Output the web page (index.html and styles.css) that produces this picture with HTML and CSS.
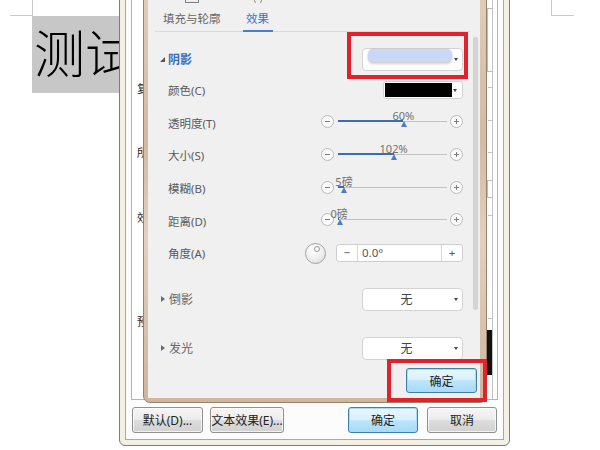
FILE: index.html
```html
<!DOCTYPE html>
<html lang="zh-CN">
<head>
    <meta charset="UTF-8">
    <meta name="viewport" content="width=device-width, initial-scale=1.0">
    <title>设置文本效果格式</title>
    <link rel="stylesheet" href="styles.css">
</head>
<body>
    <div class="desk">
        <!-- word page behind the dialogs -->
        <div class="doc">
            <span class="mark mark_l"></span>
            <span class="mark mark_r"></span>
            <div class="sel">测试</div>
        </div>

        <!-- font dialog -->
        <div class="font_dlg">
            <div class="font_client">
                <div class="font_panel">
                    <ul class="side_txt">
                        <li class="st_1">复</li>
                        <li class="st_2">所</li>
                        <li class="st_3">效</li>
                        <li class="st_4">预</li>
                    </ul>
                    <div class="r_strip">
                        <span class="r_box"></span>
                        <span class="r_tick rt_1"></span>
                        <span class="r_tick rt_2"></span>
                        <span class="r_tick rt_3"></span>
                        <span class="r_box r_box2"></span>
                        <span class="r_tick rt_4"></span>
                        <span class="r_tick rt_5"></span>
                        <span class="r_black"></span>
                    </div>
                </div>
                <div class="font_foot">
                    <button class="btn btn_d">默认(D)...</button>
                    <button class="btn btn_e">文本效果(E)...</button>
                    <button class="btn btn_blue btn_ok">确定</button>
                    <button class="btn btn_cancel">取消</button>
                </div>
            </div>
        </div>

        <!-- text effects dialog -->
        <div class="fx_dlg">
            <div class="fx_client">
                <div class="tabs">
                    <div class="tab">
                        <svg class="tab_ico" width="16" height="16" viewBox="0 0 16 16">
                            <path d="M1.5 9.5 V14.5 H14.5 V9.5" fill="none" stroke="#7a7a7a" stroke-width="1"/>
                        </svg>
                        <span>填充与轮廓</span>
                    </div>
                    <div class="tab tab_on">
                        <svg class="tab_ico" width="16" height="16" viewBox="0 0 16 16">
                            <path d="M5 9 Q3.5 12.5 5.5 15" fill="none" stroke="#8a8a8a" stroke-width="1"/>
                            <path d="M11 9 Q12.5 12.5 10.5 15" fill="none" stroke="#8a8a8a" stroke-width="1"/>
                        </svg>
                        <span>效果</span>
                    </div>
                </div>

                <div class="fx_body">
                    <div class="fx_list">
                        <div class="sec sec_open">
                            <div class="sec_head">
                                <i class="tri_open"></i>
                                <span class="sec_name">阴影</span>
                                <div class="dd dd_wide">
                                    <span class="sw_shadow"></span>
                                    <i class="arr"></i>
                                </div>
                            </div>
                            <div class="row">
                                <span class="lbl">颜色(C)</span>
                                <div class="dd dd_color">
                                    <span class="sw_black"></span>
                                    <i class="arr"></i>
                                </div>
                            </div>
                            <div class="row">
                                <span class="lbl">透明度(T)</span>
                                <div class="slider">
                                    <span class="rnd"></span>
                                    <div class="track">
                                        <div class="fill" style="width:60%"><span class="val">60%</span><i class="thumb"></i></div>
                                    </div>
                                    <span class="rnd rnd_plus"></span>
                                </div>
                            </div>
                            <div class="row">
                                <span class="lbl">大小(S)</span>
                                <div class="slider">
                                    <span class="rnd"></span>
                                    <div class="track">
                                        <div class="fill" style="width:51%"><span class="val">102%</span><i class="thumb"></i></div>
                                    </div>
                                    <span class="rnd rnd_plus"></span>
                                </div>
                            </div>
                            <div class="row">
                                <span class="lbl">模糊(B)</span>
                                <div class="slider">
                                    <span class="rnd"></span>
                                    <div class="track">
                                        <div class="fill" style="width:5.5%"><span class="val">5磅</span><i class="thumb"></i></div>
                                    </div>
                                    <span class="rnd rnd_plus"></span>
                                </div>
                            </div>
                            <div class="row">
                                <span class="lbl">距离(D)</span>
                                <div class="slider">
                                    <span class="rnd"></span>
                                    <div class="track">
                                        <div class="fill" style="width:1%"><span class="val">0磅</span><i class="thumb"></i></div>
                                    </div>
                                    <span class="rnd rnd_plus"></span>
                                </div>
                            </div>
                            <div class="row">
                                <span class="lbl">角度(A)</span>
                                <div class="angle">
                                    <span class="dial"></span>
                                    <div class="spin">
                                        <span class="sp_btn">−</span>
                                        <span class="sp_val">0.0°</span>
                                        <span class="sp_btn sp_plus">+</span>
                                    </div>
                                </div>
                            </div>
                        </div>

                        <div class="sec">
                            <div class="sec_head sec_shut">
                                <i class="tri_shut"></i>
                                <span class="sec_title">倒影</span>
                                <div class="dd dd_wide">
                                    <span class="dd_txt">无</span>
                                    <i class="arr"></i>
                                </div>
                            </div>
                        </div>
                        <div class="sec">
                            <div class="sec_head sec_shut">
                                <i class="tri_shut"></i>
                                <span class="sec_title">发光</span>
                                <div class="dd dd_wide">
                                    <span class="dd_txt">无</span>
                                    <i class="arr"></i>
                                </div>
                            </div>
                        </div>
                    </div>
                    <div class="fx_scroll"><span class="sc_thumb"></span></div>
                </div>

                <div class="fx_foot">
                    <button class="btn btn_blue btn_fx">确定</button>
                </div>
            </div>
        </div>

        <!-- red marks from the tutorial -->
        <span class="hl hl_1"></span>
        <span class="hl hl_2"></span>
    </div>
</body>
</html>
```

FILE: styles.css
```css
*{
    margin: 0;
    padding: 0;
    box-sizing: border-box;
    list-style: none;
}
body{
    width: 600px;
    height: 450px;
    overflow: hidden;
    background: #fff;
    font-family: "Noto Sans", "Noto Sans CJK SC", sans-serif;
    font-size: 11.5px;
    color: #5a5a5a;
}
.desk{
    position: relative;
    width: 600px;
    height: 450px;
}

/* page */
.doc{
    padding: 16px 0 0 32px;
}
.mark{
    position: absolute;
    top: 0;
    width: 23px;
    height: 16px;
    border-bottom: 1px solid #c8c8c8;
}
.mark_l{
    left: 10px;
    border-right: 1px solid #c8c8c8;
}
.mark_r{
    left: 551px;
    border-left: 1px solid #c8c8c8;
}
.sel{
    width: 120px;
    height: 77px;
    padding: 0 0 0 2px;
    background: #c7c7c7;
    color: #000;
    font-family: "Noto Sans CJK SC", sans-serif;
    font-weight: 300;
    font-size: 51px;
    line-height: 70px;
    white-space: nowrap;
}

/* font dialog */
.font_dlg{
    position: absolute;
    left: 119px;
    top: -20px;
    width: 391px;
    height: 466px;
    padding: 5px;
    background: #f4f0e3;
    border: 1px solid #7c7c7c;
    border-radius: 0 0 6px 6px;
}
.font_client{
    height: 100%;
    display: flex;
    flex-direction: column;
    padding: 5px 5px 6px;
    background: #fcfcfc;
    border: 1px solid #a8a8a8;
}
.font_panel{
    flex: 1;
    display: flex;
    justify-content: space-between;
    background: #fff;
    border: 1px solid #b4b4b4;
    border-top: none;
}
.side_txt{
    padding-left: 5px;
    font-family: "Noto Sans CJK SC", sans-serif;
    font-size: 11px;
    line-height: 12px;
    color: #222;
}
.st_1{ margin-top: 90px; }
.st_2{ margin-top: 52px; }
.st_3{ margin-top: 53px; }
.st_4{ margin-top: 92px; }
.r_strip{
    width: 6px;
    margin-right: 4px;
    display: flex;
    flex-direction: column;
    border-right: 1px solid #c2c2c2;
}
.r_box{
    height: 64px;
    margin-top: 16px;
    border: 1px solid #bcbcbc;
    border-right: none;
}
.r_box2{
    height: 18px;
    margin-top: 27px;
}
.r_tick{
    align-self: flex-end;
    width: 4px;
    height: 1px;
    background: #c0c0c0;
}
.rt_1{ margin-top: 15px; }
.rt_2{ margin-top: 32px; }
.rt_3{ margin-top: 31px; }
.rt_4{ margin-top: 17px; }
.rt_5{ margin-top: 102px; }
.r_black{
    height: 45px;
    margin-top: 11px;
    background: #111;
}
.font_foot{
    display: flex;
    gap: 7px;
    padding: 7px 1px 0;
}

/* buttons */
.btn{
    height: 26px;
    font: inherit;
    font-size: 12px;
    color: #222;
    border: 1px solid #8f8f8f;
    border-radius: 3px;
    background: linear-gradient(#f6f6f6, #ebebeb 50%, #dddddd 50%, #d1d1d1);
    box-shadow: inset 0 0 0 1px rgba(255,255,255,.7);
}
.btn_d{ width: 71px; }
.btn_e{ width: 74px; }
.btn_ok{
    width: 70px;
    margin-left: auto;
}
.btn_cancel{
    width: 70px;
    margin-left: 2px;
}
.btn_blue{
    border-color: #3c7fb1;
    background: linear-gradient(#eaf6fd, #d9f0fc 50%, #bee6fd 50%, #a7d9f5);
    box-shadow: inset 0 0 0 1px #a6dcf7;
}

/* text effects dialog */
.fx_dlg{
    position: absolute;
    left: 143px;
    top: -5px;
    width: 344px;
    height: 408px;
    padding: 4px 6px 4px 4px;
    border: 1px solid #97826f;
    border-radius: 0 0 7px 7px;
    background: linear-gradient(#e0ccb8, #d3baa2 35%, #e2d0be 60%, #cfb59c);
}
.fx_client{
    height: 100%;
    display: flex;
    flex-direction: column;
    background: #f0f0f0;
}
.tabs{
    display: flex;
    height: 32px;
    margin: 0 10px 0 7px;
    padding-left: 8px;
    border-bottom: 1px solid #d9d9d9;
}
.tab{
    display: flex;
    flex-direction: column;
    align-items: center;
    height: 32px;
    margin-bottom: -1px;
    border-bottom: 2px solid transparent;
    color: #666;
    font-size: 11.5px;
    line-height: 16px;
}
.tab_ico{
    margin-top: -12px;
    margin-bottom: 7px;
}
.tab_on{
    margin-left: 22px;
    padding: 0 3.5px;
    border-bottom-color: #4a7bcf;
    color: #3a6fc4;
}
.fx_body{
    flex: 1;
    display: flex;
    overflow: hidden;
}
.fx_list{
    flex: 1;
    padding: 12px 9px 0 12px;
    overflow: hidden;
}
.fx_scroll{
    width: 8px;
    padding: 5px 0 0 1px;
}
.sc_thumb{
    display: block;
    width: 5px;
    height: 273px;
    border-radius: 2px;
    background: #d4d4d4;
}
.sec_open{
    padding-bottom: 5px;
}
.sec_head{
    display: flex;
    align-items: center;
    height: 30px;
}
.sec_shut{
    height: 49px;
}
.tri_open{
    width: 0;
    height: 0;
    margin-right: 3px;
    border-left: 5px solid transparent;
    border-bottom: 5px solid #555;
}
.tri_shut{
    width: 0;
    height: 0;
    margin: 0 4px 0 1px;
    border-left: 4px solid #6a6a6a;
    border-top: 3.5px solid transparent;
    border-bottom: 3.5px solid transparent;
}
.sec_name{
    color: #3a6cbf;
    font-weight: bold;
    font-size: 12px;
}
.sec_title{
    color: #666;
    font-size: 12px;
}
.sec_head .dd{
    margin-left: auto;
}
.row{
    display: flex;
    align-items: center;
    justify-content: space-between;
    height: 32.6px;
    padding-left: 8px;
}

/* dropdowns */
.dd{
    display: flex;
    align-items: center;
    background: #fff;
    border: 1px solid #d3d3d3;
    border-radius: 4px;
}
.dd_wide{
    width: 101px;
    height: 23px;
}
.dd_color{
    width: 80px;
    height: 18px;
    padding: 1px;
    border-radius: 3px;
}
.arr{
    width: 0;
    height: 0;
    margin: 0 4px 0 auto;
    border-left: 2.5px solid transparent;
    border-right: 2.5px solid transparent;
    border-top: 3px solid #444;
}
.sw_shadow{
    align-self: flex-start;
    width: 84px;
    height: 13px;
    margin-left: 5px;
    border-radius: 5px;
    background: #cad8f6;
    box-shadow: 0 2px 3px rgba(0,0,0,.18), 0 0 2px rgba(0,0,0,.12);
}
.sw_black{
    width: 67px;
    height: 14px;
    background: #000;
}
.dd_txt{
    width: 87px;
    text-align: center;
    font-size: 12px;
    color: #444;
}

/* sliders */
.slider{
    display: flex;
    align-items: center;
    margin-bottom: 2px;
}
.rnd{
    position: relative;
    width: 13px;
    height: 13px;
    border: 1px solid #bababa;
    border-radius: 50%;
    background: #fbfbfb;
}
.rnd::before{
    content: "";
    position: absolute;
    left: 3px;
    top: 5px;
    width: 5px;
    height: 1px;
    background: #7d7d7d;
}
.rnd_plus::after{
    content: "";
    position: absolute;
    left: 5px;
    top: 3px;
    width: 1px;
    height: 5px;
    background: #7d7d7d;
}
.track{
    position: relative;
    width: 109px;
    height: 1px;
    margin: 0 3px 0 4px;
    background: #c2c2c2;
}
.fill{
    position: absolute;
    left: 0;
    top: -1px;
    height: 2px;
    background: #3d6ab5;
}
.val{
    position: absolute;
    right: 0;
    bottom: 1px;
    transform: translateX(50%);
    font-size: 11px;
    line-height: 11px;
    color: #707070;
    white-space: nowrap;
}
.thumb{
    position: absolute;
    right: -3.5px;
    top: 1px;
    width: 0;
    height: 0;
    border-left: 3.5px solid transparent;
    border-right: 3.5px solid transparent;
    border-bottom: 6px solid #4a7fc6;
}

/* angle */
.angle{
    display: flex;
    align-items: center;
    gap: 10px;
}
.dial{
    position: relative;
    width: 21px;
    height: 21px;
    border: 1px solid #a2a2a2;
    border-radius: 50%;
    background: radial-gradient(circle at 40% 30%, #fff, #eeeeee 55%, #d6d6d6);
}
.dial::after{
    content: "";
    position: absolute;
    left: 7.5px;
    top: 2px;
    width: 4px;
    height: 4px;
    border: 1px solid #9a9a9a;
    border-radius: 50%;
}
.spin{
    display: flex;
    width: 127px;
    height: 18px;
    background: #fff;
    border: 1px solid #cecece;
    border-radius: 3px;
    line-height: 16px;
    color: #555;
}
.sp_btn{
    width: 21px;
    text-align: center;
    border-right: 1px solid #d6d6d6;
}
.sp_plus{
    border-right: none;
    border-left: 1px solid #d6d6d6;
}
.sp_val{
    flex: 1;
    padding-left: 4px;
}

.fx_foot{
    display: flex;
    justify-content: flex-end;
    height: 36px;
    padding: 6px 3px 0 0;
}
.btn_fx{
    width: 71px;
    height: 25px;
}

/* red highlight frames */
.hl{
    position: absolute;
    border: 4px solid #e2222b;
}
.hl_1{
    left: 347px;
    top: 32px;
    width: 121px;
    height: 47px;
}
.hl_2{
    left: 387px;
    top: 359px;
    width: 100px;
    height: 43px;
}
```
